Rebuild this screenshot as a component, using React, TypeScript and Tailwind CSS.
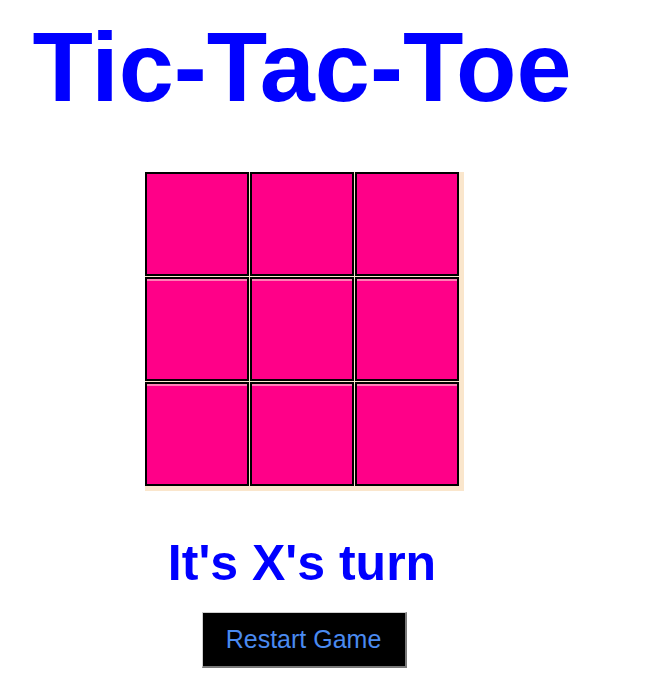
import { useState } from "react";

type Cell = "X" | "O" | null;

export default function App() {
  const [cells, setCells] = useState<Cell[]>(Array(9).fill(null));
  const [turn, setTurn] = useState<"X" | "O">("X");

  function play(i: number) {
    if (cells[i]) return;
    const next = cells.slice();
    next[i] = turn;
    setCells(next);
    setTurn(turn === "X" ? "O" : "X");
  }

  function restart() {
    setCells(Array(9).fill(null));
    setTurn("X");
  }

  return (
    <main className="min-h-screen bg-white font-['Liberation_Sans',Arial,sans-serif]">
      <div className="flex w-[604px] flex-col items-center">
        <h1 className="mt-[10px] text-[99px] leading-[1.15] font-bold text-[#0000ff]">
          Tic-Tac-Toe
        </h1>

        <div className="mt-[48px] ml-1 grid grid-cols-[repeat(3,104px)] grid-rows-[repeat(3,104px)] gap-px bg-[#fae6cc] pr-[5px] pb-[5px]">
          {cells.map((c, i) => (
            <button
              key={i}
              onClick={() => play(i)}
              className={
                i < 3
                  ? "border-2 border-black bg-[#ff0088] text-6xl font-bold text-white"
                  : "border-2 border-black bg-[#ff0088] text-6xl font-bold text-white shadow-[inset_0_2px_0_#ff7fb6]"
              }
            >
              {c}
            </button>
          ))}
        </div>

        <p className="mt-[44px] text-[50px] leading-[1.15] font-bold text-[#0000ff]">
          It's {turn}'s turn
        </p>

        <button
          onClick={restart}
          className="mt-[20px] ml-1 h-[56px] w-[205px] border-t border-l border-r-2 border-b-2 border-t-[#cfcfcf] border-l-[#cfcfcf] border-r-[#7a7a7a] border-b-[#7a7a7a] bg-black text-[25px] text-[#4a8af0]"
        >
          Restart Game
        </button>
      </div>
    </main>
  );
}
